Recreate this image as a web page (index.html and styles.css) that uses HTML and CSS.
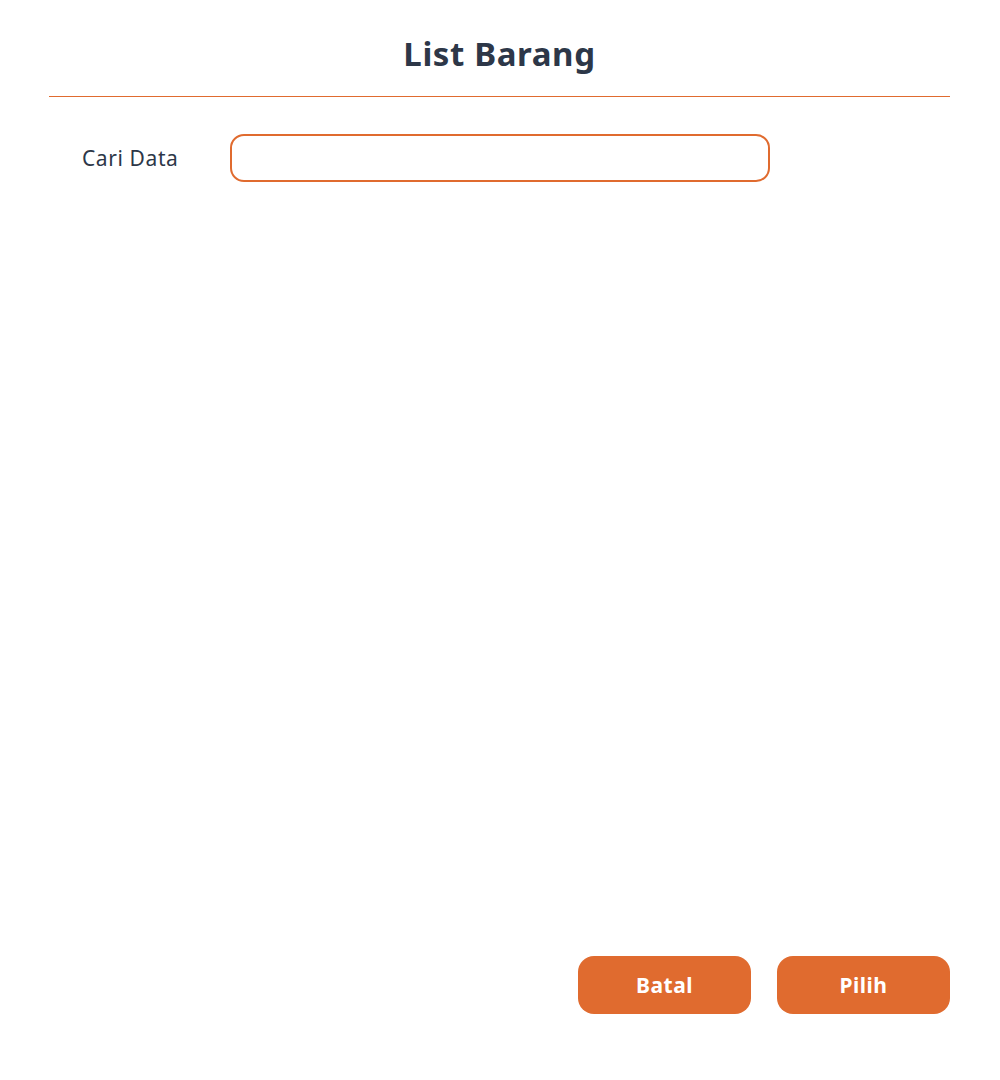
FILE: index.html
```html
<!DOCTYPE html>
<html lang="id">
<head>
<meta charset="utf-8">
<title>List Barang</title>
<link rel="stylesheet" href="styles.css">
</head>
<body>
<div class="modal">
  <header class="modal-header">
    <h1 class="modal-title">List Barang</h1>
  </header>
  <div class="search-row">
    <label class="search-label" for="cari">Cari Data</label>
    <input id="cari" class="search-input" type="text">
  </div>
  <footer class="modal-footer">
    <button class="btn">Batal</button>
    <button class="btn">Pilih</button>
  </footer>
</div>
</body>
</html>
```
FILE: styles.css
```css
html, body {
  margin: 0;
  padding: 0;
  background: #ffffff;
}
body {
  font-family: "Noto Sans", "Open Sans", sans-serif;
  color: #2d3748;
}
.modal {
  box-sizing: border-box;
  height: 1080px;
  padding: 0 50px 66px 49px;
  display: flex;
  flex-direction: column;
}
.modal-header {
  height: 96px;
  border-bottom: 1px solid #e06b2f;
  display: flex;
  justify-content: center;
  align-items: flex-start;
}
.modal-title {
  margin: 30px 0 0;
  font-size: 33px;
  line-height: 48px;
  font-weight: 700;
  letter-spacing: 0.6px;
  color: #2d3748;
}
.search-row {
  display: flex;
  align-items: center;
  margin-top: 37px;
  padding-left: 33px;
}
.search-label {
  width: 148px;
  font-size: 21px;
  letter-spacing: 0.6px;
  color: #2d3748;
}
.search-input {
  box-sizing: border-box;
  width: 540px;
  height: 48px;
  border: 2px solid #e06b2f;
  border-radius: 14px;
  outline: none;
  font-size: 18px;
  padding: 0 14px;
}
.modal-footer {
  margin-top: auto;
  display: flex;
  justify-content: flex-end;
  gap: 26px;
}
.btn {
  width: 173px;
  height: 58px;
  border: none;
  border-radius: 16px;
  background: #e06b2f;
  color: #ffffff;
  font-family: "Noto Sans", "Open Sans", sans-serif;
  font-size: 21px;
  font-weight: 700;
  letter-spacing: 0.5px;
  padding: 0;
  cursor: pointer;
}
```
